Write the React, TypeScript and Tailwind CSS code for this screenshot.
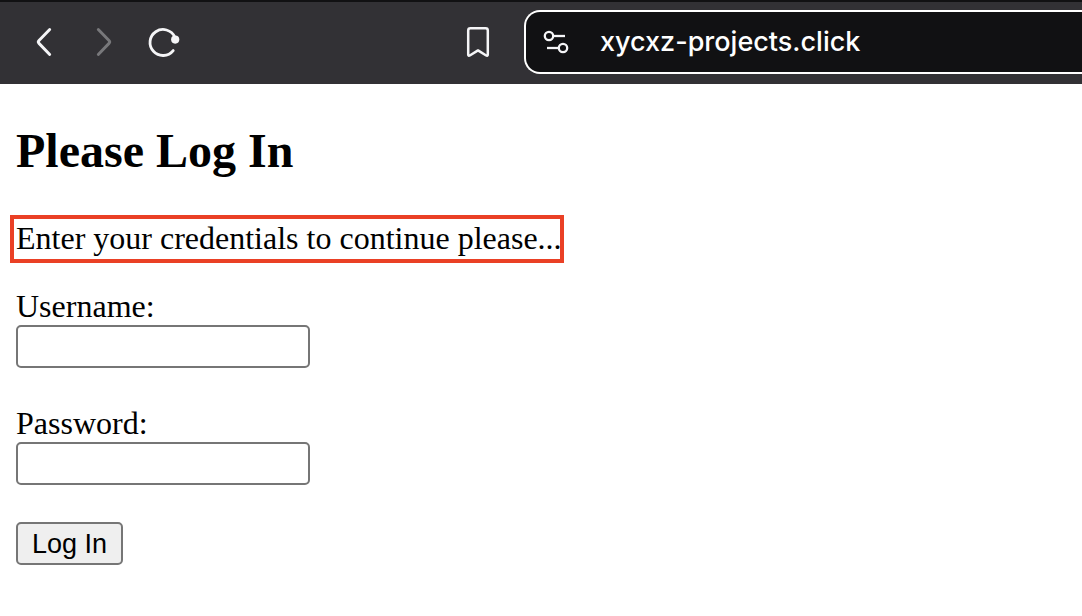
import type { ReactNode } from "react";

type ToolbarButtonProps = {
  label: string;
  disabled?: boolean;
  children: ReactNode;
};

function ToolbarButton({ label, disabled, children }: ToolbarButtonProps) {
  return (
    <button
      type="button"
      aria-label={label}
      disabled={disabled}
      className="flex size-10 shrink-0 items-center justify-center text-[#f5f5f7] disabled:text-[#78787b]"
    >
      {children}
    </button>
  );
}

function BrowserToolbar() {
  return (
    <header className="flex h-[84px] items-center border-t-2 border-[#111113] bg-[#323135] pb-0.5 pl-6">
      <nav aria-label="History" className="flex gap-5">
        <ToolbarButton label="Back">
          <svg width="40" height="40" viewBox="0 0 40 40" fill="none" stroke="currentColor" strokeWidth="2.9" strokeLinecap="round" strokeLinejoin="round">
            <path d="M25.7 7.5 L15 18.6 Q13.6 20 15 21.4 L25.7 32.5" />
          </svg>
        </ToolbarButton>
        <ToolbarButton label="Forward" disabled>
          <svg width="40" height="40" viewBox="0 0 40 40" fill="none" stroke="currentColor" strokeWidth="2.9" strokeLinecap="round" strokeLinejoin="round">
            <path d="M14.3 7.5 L25 18.6 Q26.4 20 25 21.4 L14.3 32.5" />
          </svg>
        </ToolbarButton>
        <ToolbarButton label="Reload">
          <svg width="40" height="40" viewBox="0 0 40 40" fill="none" stroke="currentColor" strokeWidth="2.8" strokeLinecap="round">
            <path d="M30.8 15 A13 13 0 1 0 29.2 28.6" />
            <circle cx="31.2" cy="17.6" r="4.1" fill="currentColor" stroke="none" />
          </svg>
        </ToolbarButton>
      </nav>
      <div className="ml-[274px] mr-[26px]">
        <ToolbarButton label="Bookmark this page">
          <svg width="40" height="40" viewBox="0 0 40 40" fill="none" stroke="currentColor" strokeWidth="2.5" strokeLinejoin="round">
            <path d="M12.4 6.2 H27.6 Q29.8 6.2 29.8 8.4 V32.4 Q29.8 34.6 27.8 33.3 L20 28.4 L12.2 33.3 Q10.2 34.6 10.2 32.4 V8.4 Q10.2 6.2 12.4 6.2 Z" />
          </svg>
        </ToolbarButton>
      </div>
      <div className="flex h-16 min-w-0 flex-1 items-center rounded-l-2xl border-2 border-r-0 border-white bg-[#111113] pl-2.5">
        <ToolbarButton label="Site information">
          <svg width="40" height="40" viewBox="0 0 40 40" fill="none" stroke="currentColor" strokeWidth="2.3">
            <circle cx="13" cy="14" r="4.2" />
            <path d="M17.2 14 H29" />
            <circle cx="27" cy="26" r="4.2" />
            <path d="M11 26 H22.8" />
          </svg>
        </ToolbarButton>
        <input
          type="text"
          aria-label="Address"
          defaultValue="xycxz-projects.click"
          className="ml-6 min-w-0 flex-1 bg-transparent font-['Inter',sans-serif] text-[27px] leading-9 font-medium text-white outline-none"
        />
      </div>
    </header>
  );
}

type FieldProps = {
  id: string;
  label: string;
  type: "text" | "password";
};

function Field({ id, label, type }: FieldProps) {
  return (
    <div className="flex flex-col items-start">
      <label htmlFor={id} className="leading-[37px]">
        {label}
      </label>
      <input
        id={id}
        name={id}
        type={type}
        className="h-[43px] w-[294px] max-w-full rounded-[5px] border-2 border-[#767676] bg-white px-1 font-['Liberation_Sans',sans-serif] text-[27px]"
      />
    </div>
  );
}

export default function App() {
  return (
    <div className="min-h-screen bg-white">
      <BrowserToolbar />
      <main className="px-4 pt-10 font-['Liberation_Serif',serif] text-[32px] leading-9 text-black">
        <h2 className="text-5xl leading-[54px] font-bold">Please Log In</h2>
        <p className="relative mt-[42px] w-fit">
          Enter your credentials to continue please...
          <span aria-hidden="true" className="absolute -top-[5px] -right-0.5 -bottom-[7px] -left-1.5 border-4 border-[#ea4025]" />
        </p>
        <form className="mt-8 flex flex-col items-start gap-[37px]" onSubmit={(event) => event.preventDefault()}>
          <Field id="username" label="Username:" type="text" />
          <Field id="password" label="Password:" type="password" />
          <button
            type="submit"
            className="h-[43px] rounded-[5px] border-2 border-[#767676] bg-[#efefef] px-3.5 font-['Liberation_Sans',sans-serif] text-[27px] leading-9"
          >
            Log In
          </button>
        </form>
      </main>
    </div>
  );
}
